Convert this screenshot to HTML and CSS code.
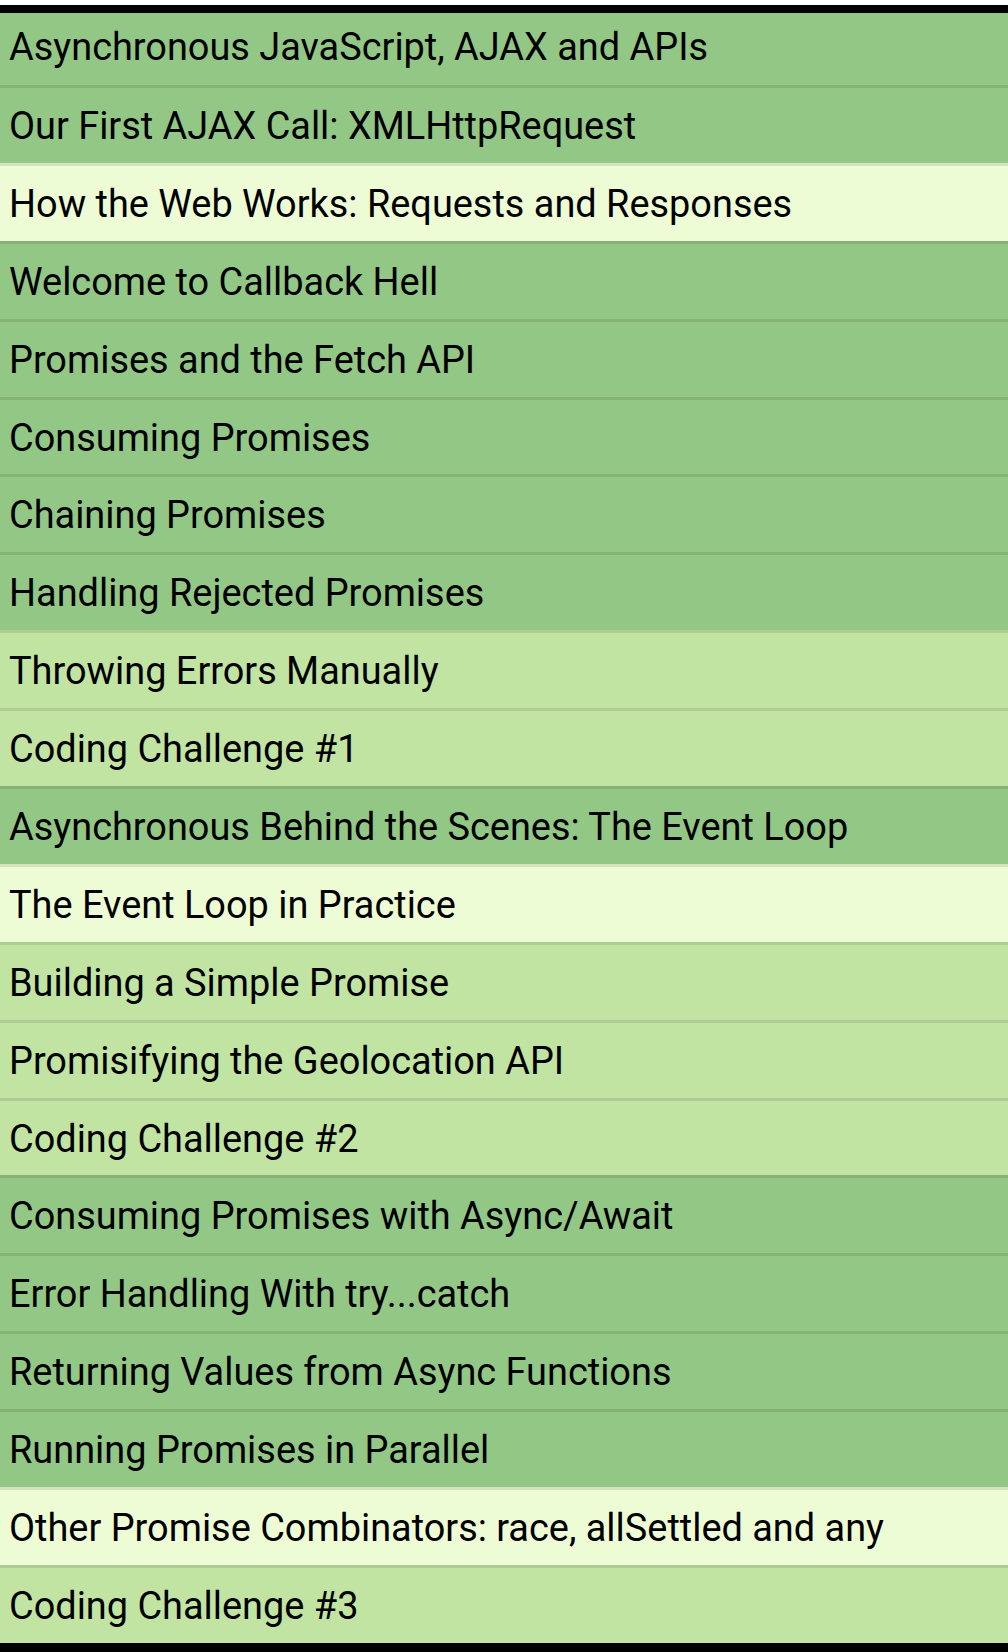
FILE: index.html
```html
<!DOCTYPE html>
<html>
<head>
<meta charset="utf-8">
<link rel="stylesheet" href="styles.css">
</head>
<body>
<ul class="list">
  <li class="row first dark">Asynchronous JavaScript, AJAX and APIs</li>
  <li class="row dark">Our First AJAX Call: XMLHttpRequest</li>
  <li class="row pale">How the Web Works: Requests and Responses</li>
  <li class="row dark">Welcome to Callback Hell</li>
  <li class="row dark">Promises and the Fetch API</li>
  <li class="row dark">Consuming Promises</li>
  <li class="row dark">Chaining Promises</li>
  <li class="row dark">Handling Rejected Promises</li>
  <li class="row light">Throwing Errors Manually</li>
  <li class="row light">Coding Challenge #1</li>
  <li class="row dark">Asynchronous Behind the Scenes: The Event Loop</li>
  <li class="row pale">The Event Loop in Practice</li>
  <li class="row light">Building a Simple Promise</li>
  <li class="row light">Promisifying the Geolocation API</li>
  <li class="row light">Coding Challenge #2</li>
  <li class="row dark">Consuming Promises with Async/Await</li>
  <li class="row dark">Error Handling With try...catch</li>
  <li class="row dark">Returning Values from Async Functions</li>
  <li class="row dark">Running Promises in Parallel</li>
  <li class="row pale">Other Promise Combinators: race, allSettled and any</li>
  <li class="row light">Coding Challenge #3</li>
</ul>
</body>
</html>
```
FILE: styles.css
```css
html, body {
  margin: 0;
  padding: 0;
  background: #ffffff;
}
body {
  padding-top: 5px;
  font-family: Roboto, "Liberation Sans", sans-serif;
}
.list {
  list-style: none;
  margin: 0;
  padding: 0;
  border-top: 8px solid #000;
  border-bottom: 9px solid #000;
}
.row {
  box-sizing: border-box;
  height: 77.9px;
  border-top: 3px solid rgba(0, 0, 0, 0.1);
  display: flex;
  align-items: center;
  padding-left: 9px;
  padding-top: 1px;
  font-size: 37.9px;
  color: #000;
  white-space: nowrap;
}
.row.first {
  height: 72px;
  border-top: none;
  padding-top: 0;
  padding-bottom: 4px;
}
.dark {
  background: #93c785;
}
.light {
  background: #c2e4a2;
}
.pale {
  background: #eefcd6;
}
```
